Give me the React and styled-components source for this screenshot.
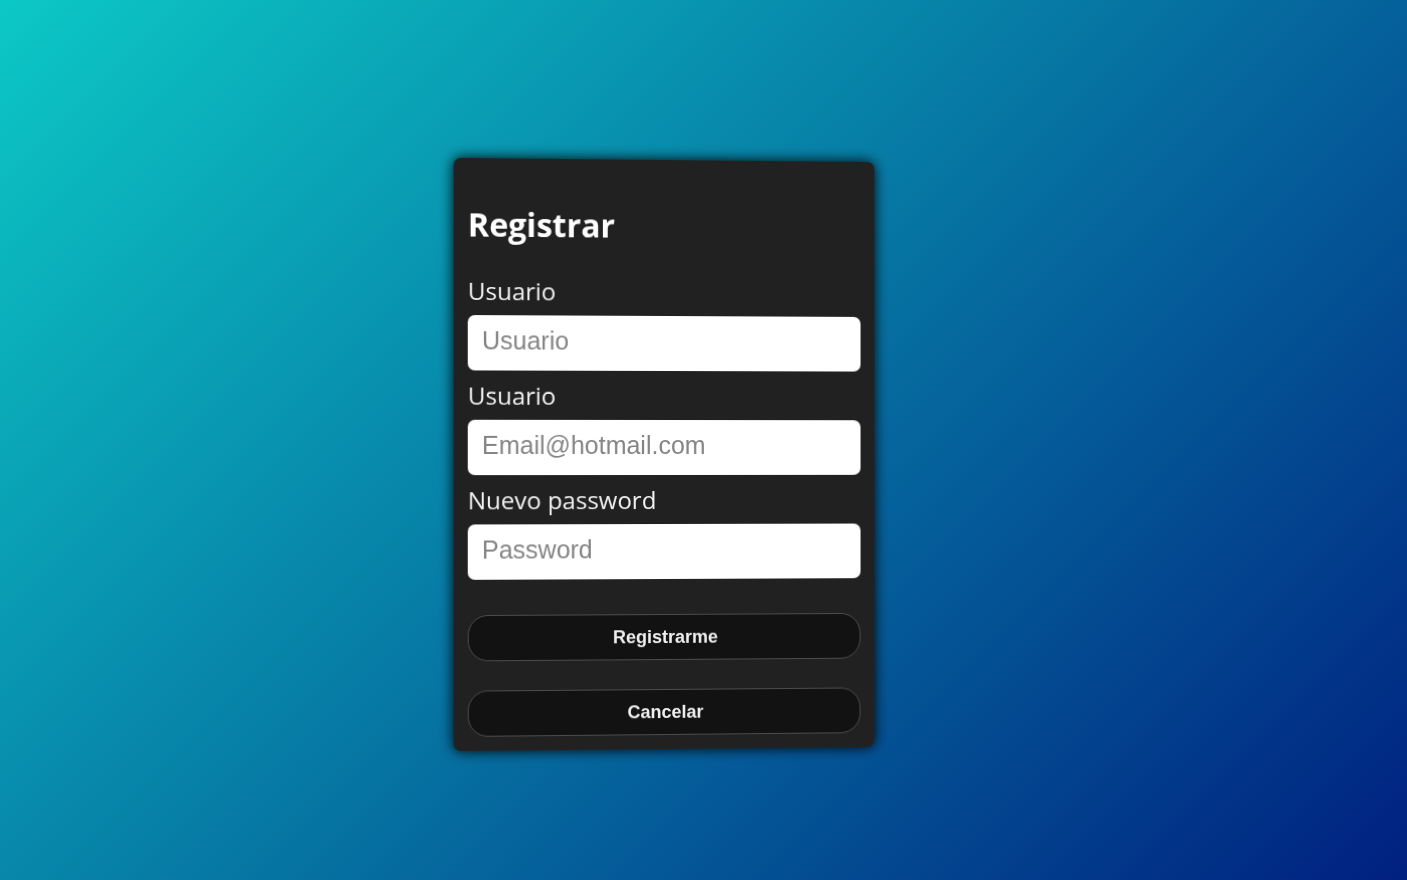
import React from "react";
import styled, { createGlobalStyle } from "styled-components";

const GlobalStyle = createGlobalStyle`
  *, *::before, *::after { box-sizing: border-box; }
  body {
    margin: 0;
    font-family: "Segoe UI", "Open Sans", sans-serif;
  }
`;

const Page = styled.main`
  min-height: 100vh;
  display: flex;
  align-items: center;
  justify-content: center;
  padding: 28px 76px 0 0;
  background: linear-gradient(135deg, #0cc8c5 0%, #002080 100%);
`;

const Card = styled.form`
  width: 100%;
  max-width: 421px;
  padding: 14px;
  display: flex;
  flex-direction: column;
  border-radius: 7px;
  background: #212121;
  color: #fff;
  box-shadow: 0 0 14px #000;
  transform: perspective(1000px) rotateY(2deg);
`;

const Title = styled.h1`
  margin: 29px 0 18px;
  font-size: 32px;
  line-height: 46px;
  font-weight: 700;
`;

const Label = styled.label`
  font-size: 24px;
  line-height: 49px;
  color: #f2f2f2;
`;

const Input = styled.input`
  width: 100%;
  height: 55px;
  padding: 0 14px 4px;
  border: 0;
  border-radius: 7px;
  background: #fff;
  color: #212121;
  font-family: "Liberation Sans", Arial, sans-serif;
  font-size: 25px;

  &::placeholder { color: #858585; opacity: 1; }
`;

const Actions = styled.div`
  display: flex;
  flex-direction: column;
  gap: 29px;
  margin-top: 35px;
`;

const Button = styled.button`
  height: 46px;
  padding: 0 14px;
  border: 1px solid #4c4c4c;
  border-radius: 20px;
  background: #121212;
  color: #eee;
  font-family: "Liberation Sans", Arial, sans-serif;
  font-size: 18px;
  font-weight: 700;
  cursor: pointer;
`;

const fields = [
  { id: "user", label: "Usuario", placeholder: "Usuario", type: "text" },
  { id: "email", label: "Usuario", placeholder: "Email@hotmail.com", type: "email" },
  { id: "password", label: "Nuevo password", placeholder: "Password", type: "password" },
];

export default function App() {
  return (
    <>
      <GlobalStyle />
      <Page>
        <Card onSubmit={(event) => event.preventDefault()}>
          <Title>Registrar</Title>
          {fields.map(({ id, label, placeholder, type }) => (
            <React.Fragment key={id}>
              <Label htmlFor={id}>{label}</Label>
              <Input id={id} type={type} placeholder={placeholder} />
            </React.Fragment>
          ))}
          <Actions>
            <Button type="submit">Registrarme</Button>
            <Button type="button">Cancelar</Button>
          </Actions>
        </Card>
      </Page>
    </>
  );
}
